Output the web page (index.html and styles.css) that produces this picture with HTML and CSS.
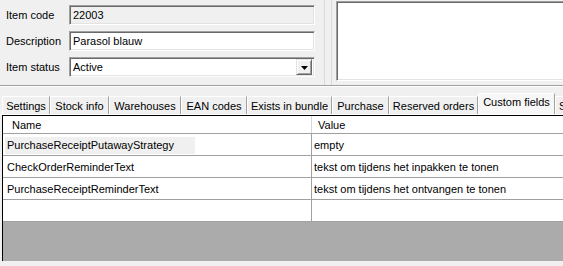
FILE: index.html
```html
<!DOCTYPE html>
<html>
<head>
<meta charset="utf-8">
<link rel="stylesheet" href="styles.css">
</head>
<body>
<div class="top">
  <div class="fields">
    <div class="frow"><span class="lbl">Item code</span><div class="inp disabled">22003</div></div>
    <div class="frow"><span class="lbl">Description</span><div class="inp">Parasol blauw</div></div>
    <div class="frow"><span class="lbl">Item status</span><div class="inp sel"><span class="val">Active</span><span class="btn"><svg width="7" height="4" viewBox="0 0 7 4"><polygon points="0,0 7,0 3.5,4" fill="#000"/></svg></span></div></div>
  </div>
  <div class="splitter"></div>
  <div class="notes"><div class="memo"></div></div>
</div>
<div class="tabs">
  <div class="tab">Settings</div>
  <div class="tab">Stock info</div>
  <div class="tab">Warehouses</div>
  <div class="tab">EAN codes</div>
  <div class="tab">Exists in bundle</div>
  <div class="tab">Purchase</div>
  <div class="tab">Reserved orders</div>
  <div class="tab active">Custom fields</div>
  <div class="tab last">Serial numbers</div>
</div>
<div class="page">
  <div class="grid">
    <div class="grow head"><div class="cname">Name</div><div class="cval">Value</div></div>
    <div class="grow"><div class="cname"><span class="focus">PurchaseReceiptPutawayStrategy</span></div><div class="cval">empty</div></div>
    <div class="grow"><div class="cname">CheckOrderReminderText</div><div class="cval">tekst om tijdens het inpakken te tonen</div></div>
    <div class="grow"><div class="cname">PurchaseReceiptReminderText</div><div class="cval">tekst om tijdens het ontvangen te tonen</div></div>
    <div class="grow"><div class="cname"></div><div class="cval"></div></div>
    <div class="workspace"></div>
  </div>
</div>
</body>
</html>
```
FILE: styles.css
```css
html, body {
  margin: 0;
  padding: 0;
  width: 563px;
  height: 266px;
  overflow: hidden;
  background: #f0f0f0;
  font-family: "Liberation Sans", Arial, sans-serif;
  font-size: 11px;
  color: #000;
}

.top {
  display: flex;
  height: 85px;
  border-bottom: 1px solid #a0a0a0;
}

.fields {
  width: 325px;
  box-sizing: border-box;
  padding: 5px 0 0 6px;
  border-right: 1px solid #dadada;
  display: flex;
  flex-direction: column;
  gap: 6px;
}

.frow {
  display: flex;
  align-items: center;
  height: 20px;
}

.lbl {
  width: 63px;
  flex: none;
}

.inp {
  width: 246px;
  height: 20px;
  box-sizing: border-box;
  background: #fff;
  border-top: 1px solid #a0a0a0;
  border-left: 1px solid #a0a0a0;
  border-right: 1px solid #fff;
  border-bottom: 1px solid #fff;
  box-shadow: inset 1px 1px 0 #696969, inset -1px -1px 0 #e3e3e3;
  padding: 0 2px 0 3px;
  display: flex;
  align-items: center;
  line-height: 16px;
}

.inp.disabled {
  background: #f0f0f0;
}

.sel {
  justify-content: space-between;
  padding-right: 2px;
}

.btn {
  width: 16px;
  height: 16px;
  box-sizing: border-box;
  background: #f0f0f0;
  border-top: 1px solid #e3e3e3;
  border-left: 1px solid #e3e3e3;
  border-right: 1px solid #696969;
  border-bottom: 1px solid #696969;
  box-shadow: inset 1px 1px 0 #fff, inset -1px -1px 0 #a0a0a0;
  display: flex;
  align-items: center;
  justify-content: center;
  padding-top: 1px;
}

.splitter {
  width: 6px;
  flex: none;
}

.notes {
  flex: 1;
  border-left: 1px solid #dadada;
  padding: 1px 0 4px 4px;
  display: flex;
}

.memo {
  flex: 1;
  background: #fff;
  border-top: 1px solid #a0a0a0;
  border-left: 1px solid #a0a0a0;
  border-bottom: 1px solid #fff;
  box-shadow: inset 1px 1px 0 #696969, inset 0 -1px 0 #e3e3e3;
}

.tabs {
  display: flex;
  align-items: flex-end;
  height: 28px;
  padding-left: 2px;
  border-top: 1px solid #fff;
  box-sizing: border-box;
  overflow: hidden;
  white-space: nowrap;
}

.tab {
  flex: none;
  height: 18px;
  box-sizing: border-box;
  border-top: 1px solid #fff;
  border-left: 1px solid #fff;
  border-right: 1px solid #a0a0a0;
  text-align: center;
  line-height: 17px;
  padding-top: 1px;
  background: #f0f0f0;
}

.tab:nth-child(1) { width: 48px; }
.tab:nth-child(2) { width: 59px; }
.tab:nth-child(3) { width: 72px; }
.tab:nth-child(4) { width: 66px; }
.tab:nth-child(5) { width: 85px; }
.tab:nth-child(6) { width: 57px; }
.tab:nth-child(7) { width: 89px; }
.tab:nth-child(8) { width: 77px; }

.tab.active {
  height: 21px;
  background: #f7f7f7;
  padding-top: 0;
}

.tab.last {
  width: 90px;
  text-align: left;
  padding-left: 3px;
}

.page {
  border-top: 1px solid #fff;
  padding-left: 2px;
  height: 152px;
  box-sizing: border-box;
}

.grid {
  height: 146px;
  box-sizing: border-box;
  border-top: 1px solid #000;
  border-left: 1px solid #000;
  display: flex;
  flex-direction: column;
  background: #ababab;
}

.grow {
  display: flex;
  height: 22px;
  flex: none;
  box-sizing: border-box;
  border-bottom: 1px solid #a0a0a0;
  background: #fff;
}

.grow.head {
  height: 18px;
}

.cname {
  width: 309px;
  flex: none;
  box-sizing: border-box;
  border-right: 1px solid #a0a0a0;
  padding: 3px 0 0 4px;
  line-height: 17px;
}

.cval {
  flex: 1;
  padding: 3px 0 0 2px;
  line-height: 17px;
  white-space: nowrap;
}

.head .cname {
  padding: 2px 0 0 9px;
  line-height: 15px;
  border-right-color: #d8d8d8;
}

.head .cval {
  padding: 2px 0 0 6px;
  line-height: 15px;
}

.focus {
  display: inline-block;
  width: 188px;
  margin-left: -2px;
  margin-top: -1px;
  padding: 0 0 0 2px;
  background: #f0f0f0;
  line-height: 17px;
}

.workspace {
  flex: 1;
  background: #ababab;
}
```
